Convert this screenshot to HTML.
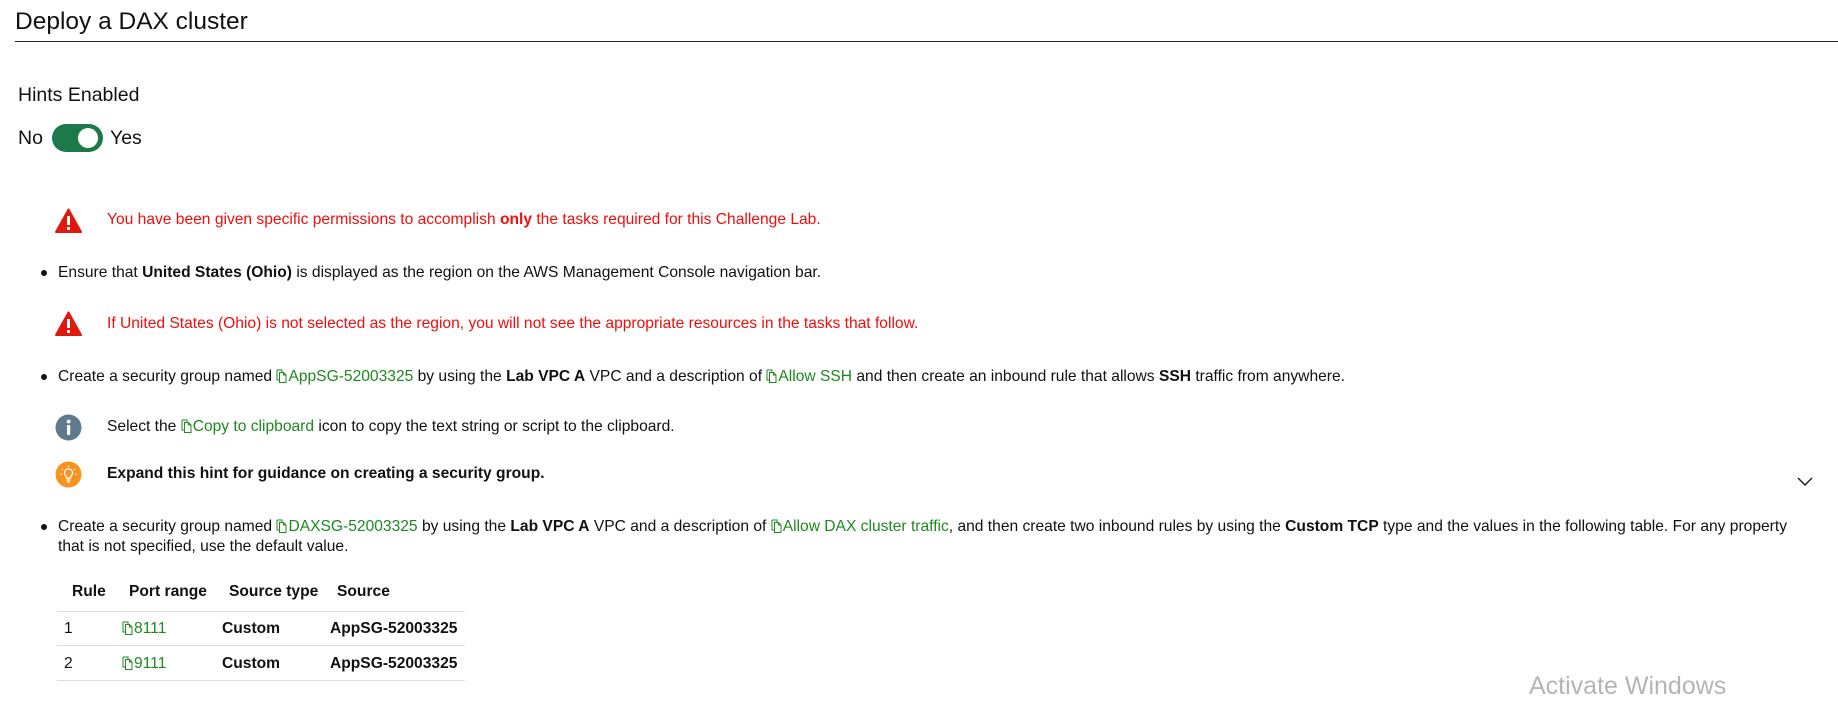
<!DOCTYPE html>
<html><head><meta charset="utf-8"><style>
body{margin:0;width:1838px;height:701px;background:#fff;position:relative;overflow:hidden;font-family:"Segoe UI","Liberation Sans",sans-serif;color:#111;font-size:15.6px}
.a{position:absolute;white-space:nowrap;line-height:20px}
.g{color:#1d8a1d}
.r{color:#f00d0d}
b{font-weight:bold}
.cp{display:inline-block;width:11px;height:14px;vertical-align:-2px;margin-right:1px}
.dot{position:absolute;width:6px;height:6px;border-radius:50%;background:#111}
</style></head><body>
<div class="a" style="left:15px;top:8px;font-size:24.5px;line-height:28px">Deploy a DAX cluster</div>
<div style="position:absolute;left:15px;top:41px;width:1823px;height:1px;background:#222"></div>
<div class="a" style="left:18px;top:84px;font-size:19.5px;line-height:22px">Hints Enabled</div>
<div class="a" style="left:18px;top:127px;font-size:19.5px;line-height:22px">No</div>
<div style="position:absolute;left:52px;top:124px;width:51px;height:28px;border-radius:14px;background:#1c7a4a"></div>
<div style="position:absolute;left:78px;top:128px;width:20px;height:20px;border-radius:50%;background:#fff"></div>
<div class="a" style="left:110px;top:127px;font-size:19.5px;line-height:22px">Yes</div>

<svg style="position:absolute;left:55px;top:208px" width="27" height="26" viewBox="0 0 27 26"><path d="M13.5 1.5 L26 24 L1 24 Z" fill="#e0190f" stroke="#e0190f" stroke-width="2" stroke-linejoin="round"/><rect x="12" y="8" width="3" height="9" fill="#fff"/><rect x="12" y="19" width="3" height="3" fill="#fff"/></svg>
<div class="a r" style="left:107px;top:210px">You have been given specific permissions to accomplish <b>only</b> the tasks required for this Challenge Lab.</div>

<div class="dot" style="left:41px;top:270px"></div>
<div class="a" style="left:58px;top:263px">Ensure that <b>United States (Ohio)</b> is displayed as the region on the AWS Management Console navigation bar.</div>

<svg style="position:absolute;left:55px;top:311px" width="27" height="26" viewBox="0 0 27 26"><path d="M13.5 1.5 L26 24 L1 24 Z" fill="#e0190f" stroke="#e0190f" stroke-width="2" stroke-linejoin="round"/><rect x="12" y="8" width="3" height="9" fill="#fff"/><rect x="12" y="19" width="3" height="3" fill="#fff"/></svg>
<div class="a r" style="left:107px;top:314px">If United States (Ohio) is not selected as the region, you will not see the appropriate resources in the tasks that follow.</div>

<svg width="0" height="0" style="position:absolute"><defs><symbol id="c" viewBox="0 0 11 14"><path d="M1 1h5v2 M1 1v10h2 M3.5 3.5h4l2.5 2.5v7.5h-6.5z M7.5 3.5v2.5h2.5" fill="none" stroke="#1d8a1d" stroke-width="1"/></symbol></defs></svg>

<div class="dot" style="left:41px;top:374px"></div>
<div class="a" style="left:58px;top:367px">Create a security group named <span class="g"><svg class="cp"><use href="#c"/></svg>AppSG-52003325</span> by using the <b>Lab VPC A</b> VPC and a description of <span class="g"><svg class="cp"><use href="#c"/></svg>Allow SSH</span> and then create an inbound rule that allows <b>SSH</b> traffic from anywhere.</div>

<svg style="position:absolute;left:55px;top:414px" width="27" height="27"><circle cx="13.5" cy="13.5" r="13" fill="#5e7a8c"/><rect x="12" y="11" width="3.2" height="10" rx="1" fill="#fff"/><circle cx="13.6" cy="7.5" r="1.9" fill="#fff"/></svg>
<div class="a" style="left:107px;top:417px">Select the <span class="g"><svg class="cp"><use href="#c"/></svg>Copy to clipboard</span> icon to copy the text string or script to the clipboard.</div>

<svg style="position:absolute;left:55px;top:461px" width="27" height="27" viewBox="0 0 27 27"><circle cx="13.5" cy="13.5" r="13" fill="#f7931e"/><path d="M10.5 14.5a4 4 0 1 1 6 0c-.8.8-1 1.5-1 2.5h-4c0-1-.2-1.7-1-2.5z M11.5 19h4 M12 21h3" fill="none" stroke="#fff" stroke-width="1.3"/><path d="M13.5 4.5v1.5 M7 8l1 1 M20 8l-1 1 M5.5 13h1.5 M20 13h1.5" stroke="#fff" stroke-width="1.2"/></svg>
<div class="a" style="left:107px;top:464px;font-weight:bold">Expand this hint for guidance on creating a security group.</div>
<svg style="position:absolute;left:1797px;top:477px" width="16" height="10"><path d="M1 1l7 7 7-7" fill="none" stroke="#222" stroke-width="1.5"/></svg>

<div class="dot" style="left:41px;top:524px"></div>
<div class="a" style="left:58px;top:517px">Create a security group named <span class="g"><svg class="cp"><use href="#c"/></svg>DAXSG-52003325</span> by using the <b>Lab VPC A</b> VPC and a description of <span class="g"><svg class="cp"><use href="#c"/></svg>Allow DAX cluster traffic</span>, and then create two inbound rules by using the <b>Custom TCP</b> type and the values in the following table. For any property</div>
<div class="a" style="left:58px;top:537px">that is not specified, use the default value.</div>

<div class="a" style="left:72px;top:582px;font-weight:bold">Rule</div>
<div class="a" style="left:129px;top:582px;font-weight:bold">Port range</div>
<div class="a" style="left:229px;top:582px;font-weight:bold">Source type</div>
<div class="a" style="left:337px;top:582px;font-weight:bold">Source</div>
<div style="position:absolute;left:57px;top:611px;width:408px;height:1px;background:#ddd"></div>
<div class="a" style="left:64px;top:619px">1</div>
<div class="a g" style="left:122px;top:619px"><svg class="cp"><use href="#c"/></svg>8111</div>
<div class="a" style="left:222px;top:619px;font-weight:bold">Custom</div>
<div class="a" style="left:330px;top:619px;font-weight:bold">AppSG-52003325</div>
<div style="position:absolute;left:57px;top:645px;width:408px;height:1px;background:#ddd"></div>
<div class="a" style="left:64px;top:654px">2</div>
<div class="a g" style="left:122px;top:654px"><svg class="cp"><use href="#c"/></svg>9111</div>
<div class="a" style="left:222px;top:654px;font-weight:bold">Custom</div>
<div class="a" style="left:330px;top:654px;font-weight:bold">AppSG-52003325</div>
<div style="position:absolute;left:57px;top:680px;width:408px;height:1px;background:#ddd"></div>

<div class="a" style="left:1529px;top:672px;font-size:25px;line-height:28px;color:#b5b5b5">Activate Windows</div>
</body></html>
